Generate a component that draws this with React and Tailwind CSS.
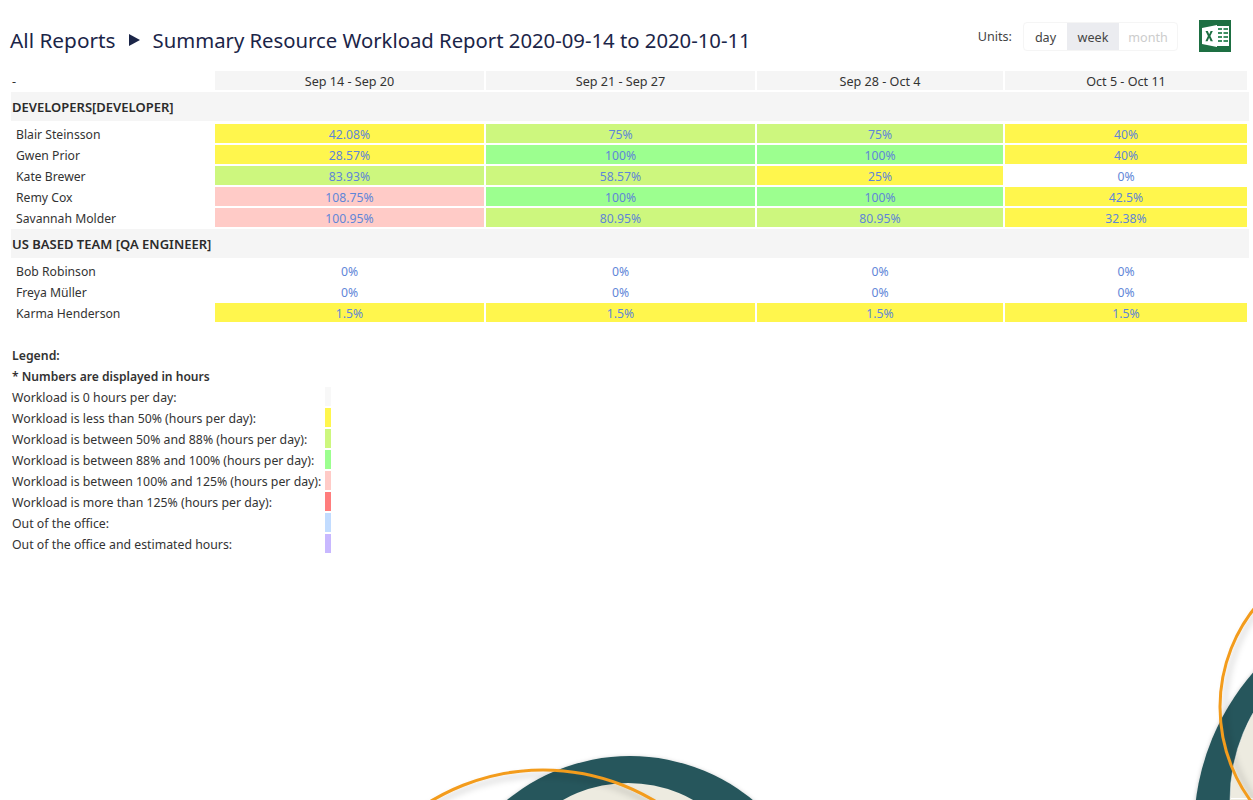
import React from 'react';

const Y = 'bg-[#fff64d]';
const G = 'bg-[#cdf77e]';
const L = 'bg-[#9cff8f]';
const P = 'bg-[#ffcbc7]';
const N = '';

const weeks = ['Sep 14 - Sep 20', 'Sep 21 - Sep 27', 'Sep 28 - Oct 4', 'Oct 5 - Oct 11'];

const developers = [
  ['Blair Steinsson', ['42.08%', Y], ['75%', G], ['75%', G], ['40%', Y]],
  ['Gwen Prior', ['28.57%', Y], ['100%', L], ['100%', L], ['40%', Y]],
  ['Kate Brewer', ['83.93%', G], ['58.57%', G], ['25%', Y], ['0%', N]],
  ['Remy Cox', ['108.75%', P], ['100%', L], ['100%', L], ['42.5%', Y]],
  ['Savannah Molder', ['100.95%', P], ['80.95%', G], ['80.95%', G], ['32.38%', Y]],
];

const qa = [
  ['Bob Robinson', ['0%', N], ['0%', N], ['0%', N], ['0%', N]],
  ['Freya Müller', ['0%', N], ['0%', N], ['0%', N], ['0%', N]],
  ['Karma Henderson', ['1.5%', Y], ['1.5%', Y], ['1.5%', Y], ['1.5%', Y]],
];

const legend = [
  ['Workload is 0 hours per day:', 'bg-[#f8f8f8]'],
  ['Workload is less than 50% (hours per day):', Y],
  ['Workload is between 50% and 88% (hours per day):', G],
  ['Workload is between 88% and 100% (hours per day):', L],
  ['Workload is between 100% and 125% (hours per day):', P],
  ['Workload is more than 125% (hours per day):', 'bg-[#ff7d7d]'],
  ['Out of the office:', 'bg-[#c2dcff]'],
  ['Out of the office and estimated hours:', 'bg-[#c8b8ff]'],
];

const cols = 'grid grid-cols-[201px_269px_269px_246px_242px] gap-x-[2px] w-[1235px]';

const Row = ({ row }) => (
  <div className={`${cols} mb-[2px] text-[12.2px] leading-[19px]`}>
    <div className="h-[19px] pt-px pl-1">{row[0]}</div>
    {row.slice(1).map(([value, bg], i) => (
      <div key={i} className={`h-[19px] pt-px text-center text-[#5f86d8] ${bg}`}>{value}</div>
    ))}
  </div>
);

const Group = ({ title }) => (
  <div className="h-[29px] mt-[2px] mb-[3px] -ml-px mr-[4px] pl-px bg-[#f5f5f5] font-semibold leading-[31px] text-[#2b2b2b]">{title}</div>
);

const ExcelIcon = () => (
  <svg width="32" height="32" viewBox="0 0 32 32">
    <rect width="32" height="32" fill="#1d6f42" />
    <rect x="18" y="6" width="12" height="20" fill="#fff" />
    <path d="M19 8h4v2h-4zM24.500 8H29v2h-4.500zM19 12h4v2h-4zM24.500 12H29v2h-4.500zM19 16h4v2h-4zM24.500 16H29v2h-4.500zM19 20h4v2h-4zM24.500 20H29v2h-4.500z" fill="#3f8f63" />
    <path d="M3 8 18 5v22L3 24z" fill="#fff" />
    <path d="M6.500 11h2.300l1.400 3.200 1.400-3.200h2.200l-2.400 5 2.500 5.200h-2.300l-1.500-3.400-1.500 3.400H6.400L8.900 16z" fill="#1d6f42" />
  </svg>
);

// the round shapes in the page background
const Decor = () => (
  <svg className="absolute left-0 top-0 pointer-events-none" width="1253" height="800" viewBox="0 0 1253 800">
    <defs>
      <filter id="soft" x="-10%" y="-10%" width="120%" height="120%">
        <feDropShadow dx="0" dy="1" stdDeviation="2" floodColor="#000" floodOpacity="0.25" />
      </filter>
      <filter id="ringDown" x="-10%" y="-10%" width="120%" height="120%">
        <feDropShadow dx="0" dy="5" stdDeviation="3" floodColor="#000" floodOpacity="0.2" />
      </filter>
      <filter id="ringRight" x="-10%" y="-10%" width="120%" height="120%">
        <feDropShadow dx="5" dy="0" stdDeviation="3" floodColor="#000" floodOpacity="0.2" />
      </filter>
    </defs>
    <circle cx="630" cy="950" r="194" fill="#25565b" filter="url(#soft)" />
    <circle cx="628" cy="916" r="133" fill="#edebe0" />
    <circle cx="543" cy="987" r="217" fill="none" stroke="#f39c1f" strokeWidth="3" filter="url(#ringDown)" />
    <circle cx="1433" cy="830" r="239" fill="#25565b" filter="url(#soft)" />
    <circle cx="1406" cy="800" r="176" fill="#edebe0" stroke="#fff" strokeOpacity="0.5" />
    <rect x="1231" y="798" width="22" height="1" fill="#fff" />
    <circle cx="1379" cy="707" r="159" fill="none" stroke="#f39c1f" strokeWidth="3" filter="url(#ringRight)" />
  </svg>
);

export default function App() {
  return (
    <div className="relative h-[800px] w-[1253px] overflow-hidden bg-white text-[13px] text-[#333] font-['Noto_Sans',sans-serif]">
      <Decor />
      <div className="relative">
        <div className="flex h-[71px] items-start pl-[10px] pr-[22px]">
          <h1 className="mt-[25px] flex items-center text-[20.3px] leading-[30px] text-[#1b2548]">
            <span className="text-[20.8px]">All Reports</span>
            <span className="mx-[13px] h-0 w-0 border-y-[6px] border-l-[11px] border-y-transparent border-l-[#1b2548]" />
            Summary Resource Workload Report 2020-09-14 to 2020-10-11
          </h1>
          <div className="ml-auto mt-[22px] flex items-center text-[12.6px]">
            <span className="mr-[11px] pt-px text-[#444]">Units:</span>
            <div className="flex h-[29px] items-stretch rounded border border-[#f5f5f5] leading-[29px]">
              <span className="w-[43px] text-center text-[#444]">day</span>
              <span className="w-[52px] bg-[#ebecf0] text-center text-[#444]">week</span>
              <span className="w-[58px] text-center text-[#ccc]">month</span>
            </div>
          </div>
          <div className="ml-[21px] mt-[20px]"><ExcelIcon /></div>
        </div>

        <div className="pl-3">
          <div className={`${cols} text-[12.6px] leading-[19px]`}>
            <div className="h-[19px] pt-px">-</div>
            {weeks.map(w => <div key={w} className="h-[19px] pt-px bg-[#f5f5f5] text-center">{w}</div>)}
          </div>
          <Group title="DEVELOPERS[DEVELOPER]" />
          {developers.map(r => <Row key={r[0]} row={r} />)}
          <Group title="US BASED TEAM [QA ENGINEER]" />
          {qa.map(r => <Row key={r[0]} row={r} />)}

          <div className="mt-[22px] text-[12.3px] leading-[23px]">
            <div className="h-[21px] font-semibold">Legend:</div>
            <div className="h-[21px] font-semibold text-[12.1px]">* Numbers are displayed in hours</div>
            {legend.map(([label, bg]) => (
              <div key={label} className="flex h-[21px]">
                <div className="w-[313px] whitespace-nowrap">{label}</div>
                <div className={`w-[6px] h-[19px] mt-px ${bg}`} />
              </div>
            ))}
          </div>
        </div>
      </div>
    </div>
  );
}
